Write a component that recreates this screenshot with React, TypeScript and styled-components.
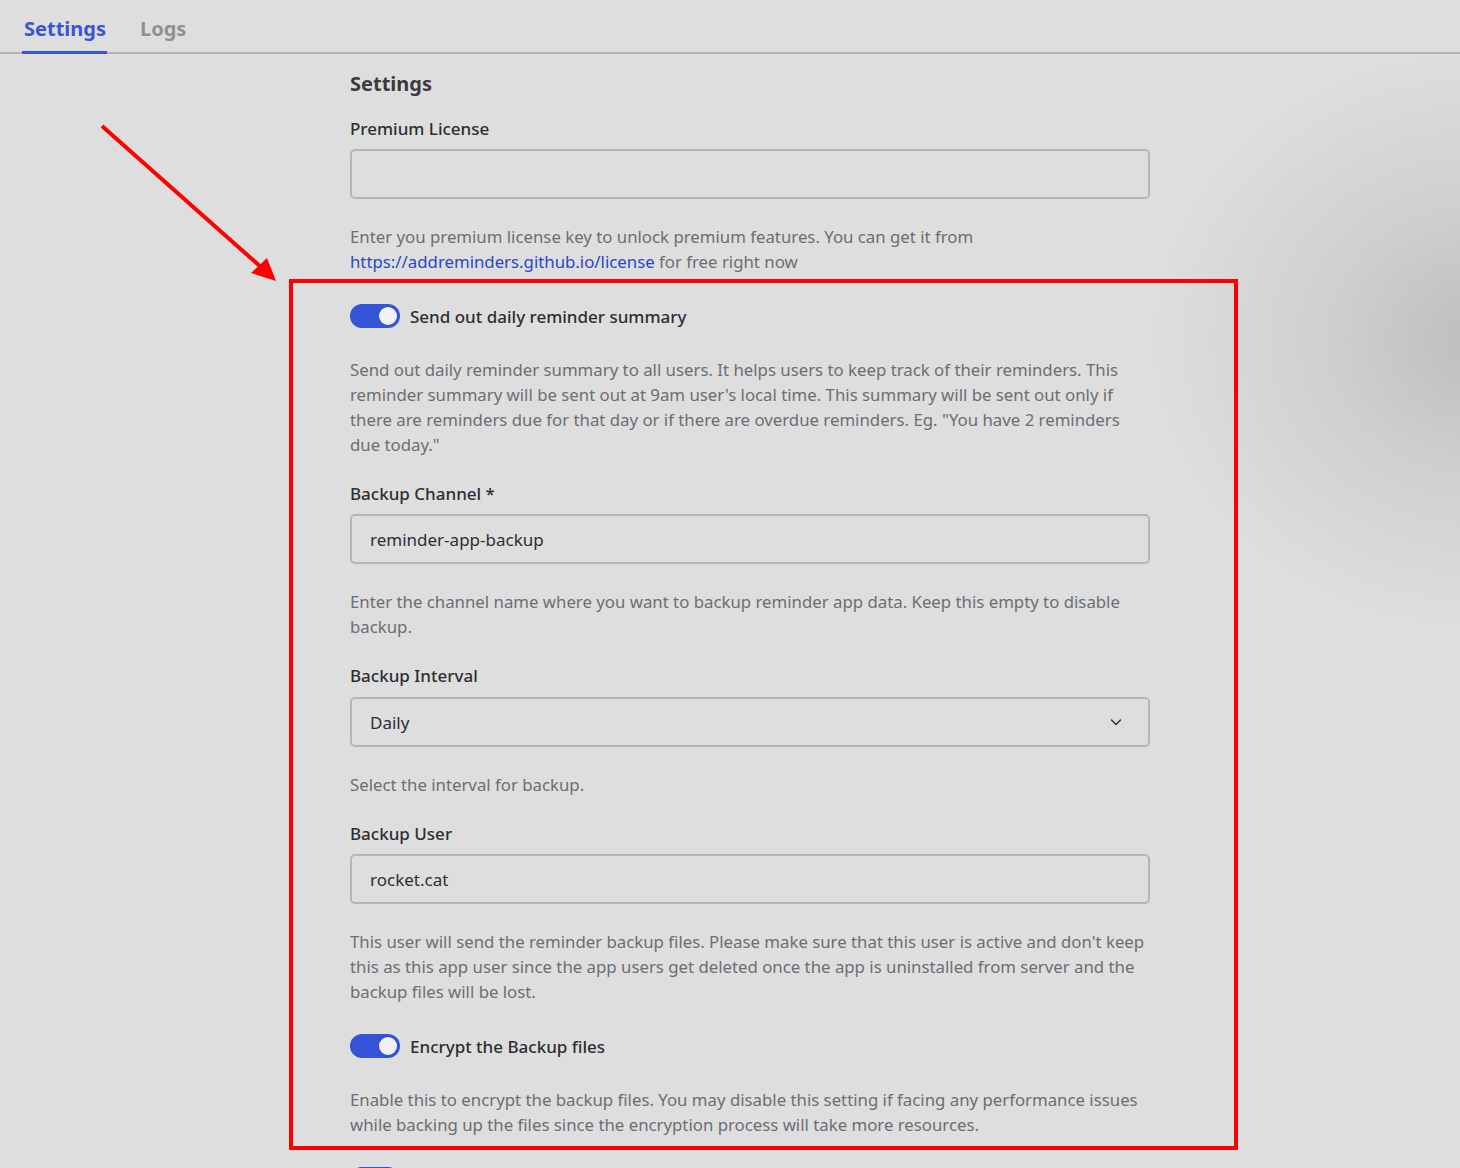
import React from "react";
import styled, { createGlobalStyle } from "styled-components";

const App = () => {
  return (
    <>
      <GlobalStyle />
      <Page>
        <Tabs>
          <Tab active>Settings</Tab>
          <Tab>Logs</Tab>
        </Tabs>

        <Content>
          <Heading>Settings</Heading>

          <Label>Premium License</Label>
          <Input defaultValue="" />
          <Hint>
            Enter you premium license key to unlock premium features. You can get it from
            <br />
            <Link href="#">https://addreminders.github.io/license</Link> for free right now
          </Hint>

          <ToggleRow>
            <Toggle on />
            <ToggleLabel>Send out daily reminder summary</ToggleLabel>
          </ToggleRow>
          <ToggleHint>
            Send out daily reminder summary to all users. It helps users to keep track of their reminders. This
            <br />
            reminder summary will be sent out at 9am user's local time. This summary will be sent out only if
            <br />
            there are reminders due for that day or if there are overdue reminders. Eg. "You have 2 reminders
            <br />
            due today."
          </ToggleHint>

          <Label>Backup Channel *</Label>
          <Input defaultValue="reminder-app-backup" />
          <Hint>
            Enter the channel name where you want to backup reminder app data. Keep this empty to disable
            <br />
            backup.
          </Hint>

          <Label>Backup Interval</Label>
          <Select>
            <span>Daily</span>
            <Chevron viewBox="0 0 16 16">
              <path d="M3.5 6l4.5 4.5L12.5 6" />
            </Chevron>
          </Select>
          <Hint>Select the interval for backup.</Hint>

          <Label>Backup User</Label>
          <Input defaultValue="rocket.cat" />
          <Hint>
            This user will send the reminder backup files. Please make sure that this user is active and don't keep
            <br />
            this as this app user since the app users get deleted once the app is uninstalled from server and the
            <br />
            backup files will be lost.
          </Hint>

          <ToggleRow>
            <Toggle on />
            <ToggleLabel>Encrypt the Backup files</ToggleLabel>
          </ToggleRow>
          <ToggleHint>
            Enable this to encrypt the backup files. You may disable this setting if facing any performance issues
            <br />
            while backing up the files since the encryption process will take more resources.
          </ToggleHint>

          <ToggleRow>
            <Toggle on />
          </ToggleRow>
        </Content>

        <Highlight />
        <Arrow viewBox="0 0 1460 1168">
          <line x1="102" y1="126" x2="262" y2="268" />
          <polygon points="276,281 251,273 267,258" />
        </Arrow>
      </Page>
    </>
  );
};

export default App;

const GlobalStyle = createGlobalStyle`
  html, body {
    margin: 0;
    height: 100%;
  }
  body {
    background-color: #dedede;
    background-image: radial-gradient(ellipse 330px 290px at 1480px 340px, #bdbdbd 0%, #cfcfcf 45%, #dedede 100%);
    background-repeat: no-repeat;
    font-family: "Noto Sans", "Open Sans", sans-serif;
    overflow: hidden;
  }
`;

const Page = styled.div`
  position: relative;
  height: 1168px;
  overflow: hidden;
`;

const Tabs = styled.div`
  display: flex;
  gap: 31px;
  height: 52px;
  padding-left: 22px;
  border-bottom: 2px solid #b3b3b6;
`;

const Tab = styled.div<{ active?: boolean }>`
  display: flex;
  align-items: center;
  padding: 6px 1px 0 2px;
  margin-bottom: -2px;
  font-size: 20px;
  font-weight: 700;
  color: ${(p) => (p.active ? "#3a55d4" : "#8e9095")};
  border-bottom: 3px solid ${(p) => (p.active ? "#3a55d4" : "transparent")};
`;

const Content = styled.div`
  width: 800px;
  margin-left: 350px;
  padding-top: 16px;
`;

const Heading = styled.h2`
  margin: 0 0 19px;
  font-size: 20px;
  line-height: 28px;
  font-weight: 700;
  color: #3a3b40;
`;

const Label = styled.div`
  margin-top: 25px;
  font-size: 17px;
  line-height: 24px;
  font-weight: 500;
  color: #2c2e34;

  &:first-of-type {
    margin-top: 0;
  }
`;

const Input = styled.input`
  display: block;
  box-sizing: border-box;
  width: 100%;
  height: 50px;
  margin-top: 8px;
  padding: 0 18px;
  border: 2px solid #b6b6ba;
  border-radius: 5px;
  background: transparent;
  font-family: inherit;
  font-size: 17px;
  color: #2c2e34;
  outline: none;
`;

const Select = styled.div`
  display: flex;
  align-items: center;
  justify-content: space-between;
  box-sizing: border-box;
  height: 50px;
  margin-top: 9px;
  padding: 0 24px 0 18px;
  border: 2px solid #b6b6ba;
  border-radius: 5px;
  font-size: 17px;
  color: #2c2e34;
`;

const Chevron = styled.svg`
  width: 16px;
  height: 16px;
  fill: none;
  stroke: #3a3b40;
  stroke-width: 1.6;
  stroke-linecap: round;
  stroke-linejoin: round;
`;

const Hint = styled.p`
  margin: 25px 0 0;
  font-size: 16.8px;
  line-height: 25px;
  color: #6b6e75;
  white-space: nowrap;
`;

const ToggleHint = styled(Hint)`
  margin-top: 29px;
`;

const Link = styled.a`
  color: #2d47c6;
  text-decoration: none;
`;

const ToggleRow = styled.div`
  display: flex;
  align-items: center;
  gap: 10px;
  margin-top: 30px;
  height: 24px;
`;

const Toggle = styled.span<{ on?: boolean }>`
  position: relative;
  box-sizing: border-box;
  width: 50px;
  height: 24px;
  border-radius: 12px;
  background: ${(p) => (p.on ? "#3553d6" : "#9ea2a8")};

  &::after {
    content: "";
    position: absolute;
    top: 3px;
    left: ${(p) => (p.on ? "29px" : "3px")};
    width: 18px;
    height: 18px;
    border-radius: 50%;
    background: #f2f2f4;
  }
`;

const ToggleLabel = styled.span`
  font-size: 17px;
  font-weight: 500;
  color: #2c2e34;
`;

const Highlight = styled.div`
  position: absolute;
  left: 289px;
  top: 279px;
  width: 949px;
  height: 871px;
  box-sizing: border-box;
  border: 4px solid #ff0000;
  pointer-events: none;
`;

const Arrow = styled.svg`
  position: absolute;
  left: 0;
  top: 0;
  width: 1460px;
  height: 1168px;
  pointer-events: none;

  line {
    stroke: #ff0000;
    stroke-width: 4;
  }
  polygon {
    fill: #ff0000;
  }
`;
